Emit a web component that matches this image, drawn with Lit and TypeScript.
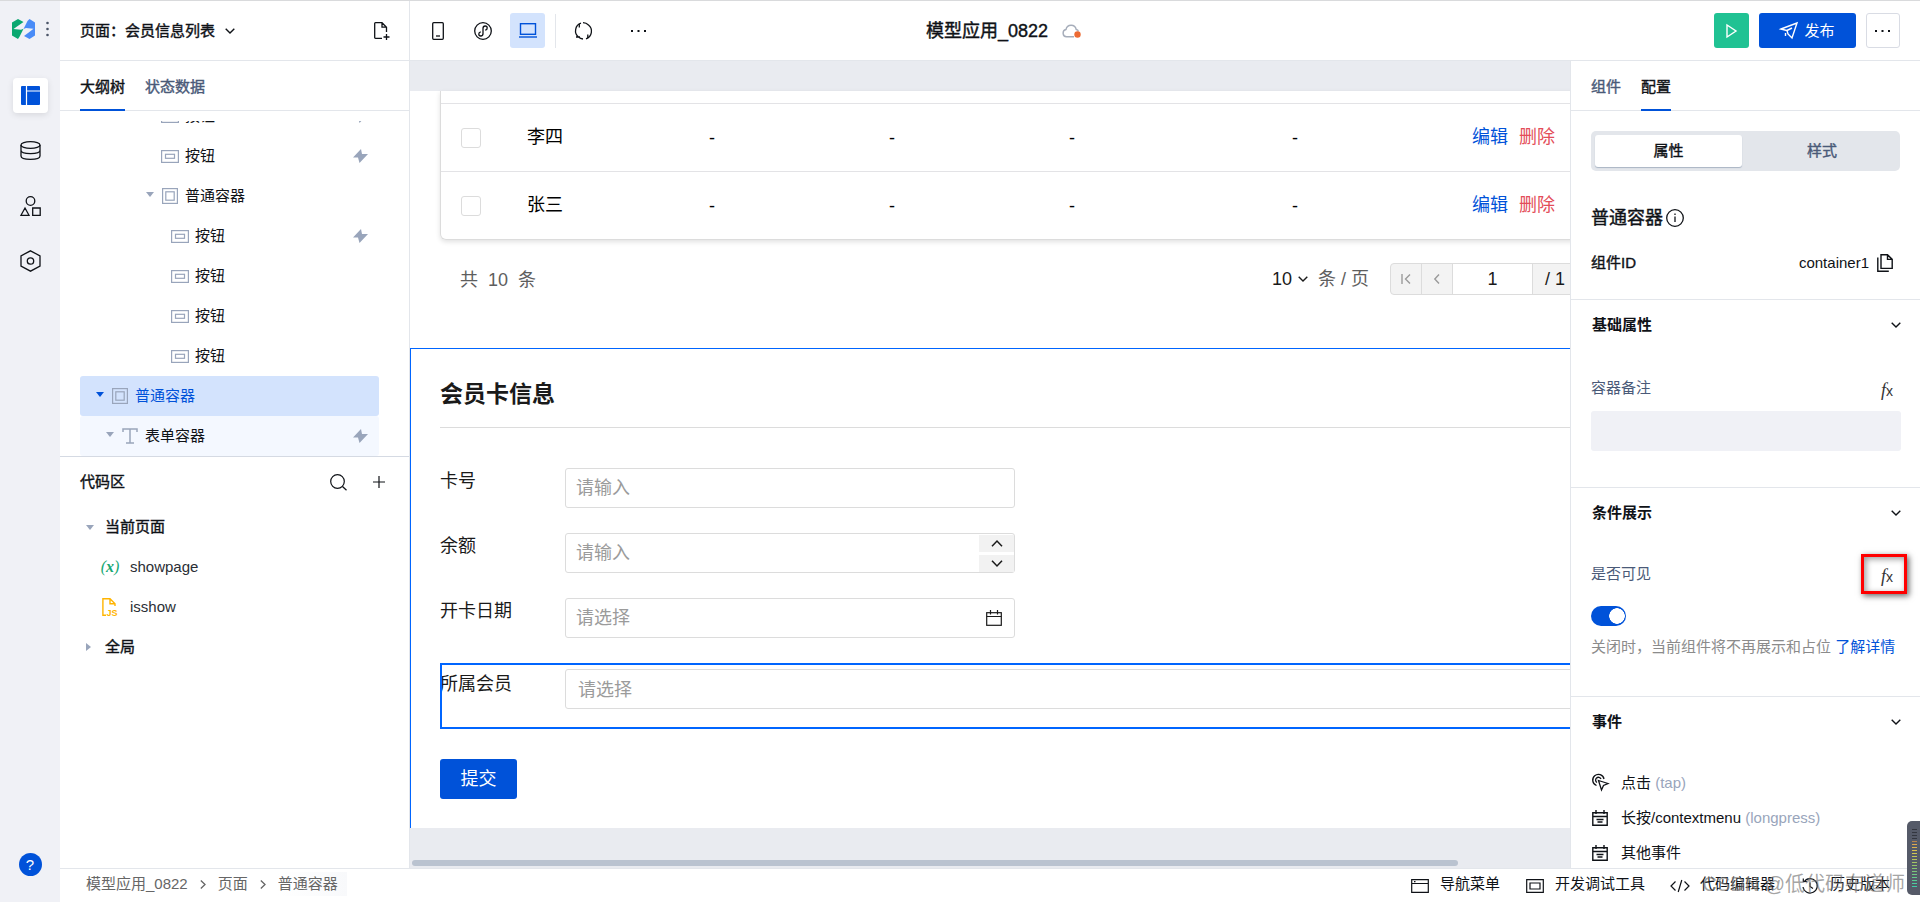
import { LitElement, html, svg, css, nothing } from "lit";
import type { TemplateResult } from "lit";
import { customElement, property } from "lit/decorators.js";
import { classMap } from "lit/directives/class-map.js";

const FONT = css`"Liberation Sans", "Noto Sans CJK SC", sans-serif`;

const base = css`
  *, *::before, *::after { box-sizing: border-box; }
  :host { font: 15px/20px ${FONT}; color: #0f1217; }
  button, input, select { font: inherit; color: inherit; margin: 0; }
  button { padding: 0; border: 0; background: none; display: inline-flex; align-items: center; justify-content: center; }
  input, select { outline: 0; }
  a { text-decoration: none; }
  h1, h2, h3, p, ul { margin: 0; padding: 0; font: inherit; }
  ul { list-style: none; }
  svg { display: block; flex: none; overflow: visible; }
  .strong { -webkit-text-stroke: 0.4px currentColor; }
`;

const ico = (w: number, h: number, body: TemplateResult, width = 1.2) => html`<svg
  width=${w} height=${h} viewBox="0 0 ${w} ${h}" fill="none" stroke="currentColor"
  stroke-width=${width} aria-hidden="true">${body}</svg>`;

const chevronDown = () => ico(10, 6, svg`<path d="M.7.7 5 5 9.300.7"/>`, 1.4);
const chevronRight = () => ico(6, 9, svg`<path d="M.8.6 5 4.500.8 8.400"/>`, 1.3);
const dots = () => ico(16, 4, svg`<g fill="currentColor" stroke="none"><rect x="0" y="1" width="2" height="2"/><rect x="6.500" y="1" width="2" height="2"/><rect x="13" y="1" width="2" height="2"/></g>`);
const buttonIcon = () => ico(18, 13, svg`<rect x=".6" y=".6" width="16.800" height="11.800"/><rect x="4.500" y="4.300" width="9" height="4"/>`);
const boxIcon = () => ico(16, 16, svg`<rect x=".6" y=".6" width="14.800" height="14.800"/><rect x="3.800" y="3.800" width="8.400" height="8.400"/>`);
const textIcon = () => ico(16, 16, svg`<path d="M1 4V1h14v3M8 1v14M4 15h8"/>`, 1.5);
const bolt = () => ico(15, 14, svg`<path d="M8 0 0 8.500h5L6.500 14 15 5H9z" fill="currentColor" stroke="none"/>`);
const arrow = () => ico(8, 5, svg`<path d="M0 0h8L4 5z" fill="currentColor" stroke="none"/>`);
const arrowSide = () => ico(5, 8, svg`<path d="M0 0v8l5-4z" fill="currentColor" stroke="none"/>`);
const eventIcon = () => ico(16, 16, svg`<path d="M.8 2.800h14.400v12.400H.8zM.8 6.500h14.400M4 0v4M12 0v4M4.500 9.500h7M5.500 12h5"/>`, 1.4);

interface TreeItem { level: number; label: string; kind: "button" | "box" | "text"; bolt?: boolean; selected?: boolean; tinted?: boolean }

const TREE: TreeItem[] = [
  { level: 5, label: "按钮", kind: "button", bolt: true },
  { level: 5, label: "按钮", kind: "button", bolt: true },
  { level: 5, label: "普通容器", kind: "box" },
  { level: 6, label: "按钮", kind: "button", bolt: true },
  { level: 6, label: "按钮", kind: "button" },
  { level: 6, label: "按钮", kind: "button" },
  { level: 6, label: "按钮", kind: "button" },
  { level: 0, label: "普通容器", kind: "box", selected: true },
  { level: 1, label: "表单容器", kind: "text", bolt: true, tinted: true },
];

@customElement("side-rail")
export class SideRail extends LitElement {
  static styles = [base, css`
    :host { background: #f0f1f6; width: 60px; display: flex; flex-direction: column; align-items: center; padding: 18px 0 26px; }
    .brand { display: flex; align-items: center; gap: 10px; color: #4b5568; height: 20px; }
    nav { display: flex; flex-direction: column; gap: 20px; margin-top: 39px; }
    .item { width: 35px; height: 35px; border-radius: 4px; }
    .active { background: #fff; color: #0052d9; box-shadow: 0 2px 6px #0000001a; }
    .help { margin-top: auto; width: 23px; height: 23px; border-radius: 50%; background: #0052d9; color: #fff; }
  `];
  render() {
    return html`
      <div class="brand">
        <svg width="24" height="20" viewBox="0 0 24 20">
          <path fill="#0aa870" d="M0 3.500 6 0l5.500 3L5 7.500 1.500 10 9 10.800l2.500-1-4 8L6 20 0 16.500z"/>
          <path fill="#4a8cf7" d="M17.500 0 23 3.500v13L17.500 20 12 17l6-4.500 3.500-2.700-7.500-.8-2.500 1 4-8z"/>
        </svg>
        <svg width="3" height="16" viewBox="0 0 3 16" fill="currentColor"><circle cx="1.500" cy="2" r="1.300"/><circle cx="1.500" cy="8" r="1.300"/><circle cx="1.500" cy="14" r="1.300"/></svg>
      </div>
      <nav>
        <button class="item active" aria-label="编辑器"><svg width="19" height="19" viewBox="0 0 19 19"><rect width="19" height="19" rx="1" fill="#0052d9"/><path d="M5.500 0v19M5.500 5H19" stroke="#fff" stroke-width="1.200"/></svg></button>
        <button class="item" aria-label="数据源">${ico(21, 19, svg`<ellipse cx="10.500" cy="4" rx="9.500" ry="3.400"/><path d="M1 4v11c0 2 4 3.400 9.500 3.400S20 17 20 15V4M1 9.300c0 2 4 3.400 9.500 3.400S20 11.300 20 9.300"/>`, 1.3)}</button>
        <button class="item" aria-label="素材">${ico(21, 20, svg`<circle cx="10.500" cy="5" r="4.300"/><path d="M5 12 9 19.300H1zM12.700 12h7.500v7.300h-7.500z"/>`, 1.3)}</button>
        <button class="item" aria-label="设置">${ico(21, 22, svg`<path d="m10.500.8 9.500 5v10.400l-9.500 5-9.500-5V5.800z"/><circle cx="10.500" cy="11" r="3.200"/>`, 1.3)}</button>
      </nav>
      <button class="help" aria-label="帮助">?</button>`;
  }
}

@customElement("app-header")
export class AppHeader extends LitElement {
  static styles = [base, css`
    :host { display: grid; grid-template-columns: 1fr auto 1fr; height: 60px; border-bottom: 1px solid #e3e6eb; padding-right: 20px; background: #fff; }
    .left, .right, .title, .tools, .page { display: flex; align-items: center; }
    .page { width: 350px; flex: none; align-self: stretch; padding: 0 19px 0 20px; border-right: 1px solid #e3e6eb; justify-content: space-between; }
    .picker { gap: 10px; }
    .tools { padding-left: 10px; }
    .tool { width: 35px; height: 35px; border-radius: 3px; margin-right: 10px; }
    .active { background: #d3e3fd; color: #0052d9; }
    .sep { width: 1px; height: 34px; background: #e3e6eb; }
    .spaced { margin: 0 10px; }
    .title { font-size: 18px; gap: 14px; padding-left: 48px; }
    .right { justify-content: flex-end; gap: 10px; }
    .run { width: 35px; height: 35px; border-radius: 3px; background: #20c293; color: #fff; }
    .publish { width: 97px; height: 35px; border-radius: 3px; background: #0052d9; color: #fff; gap: 6px; }
    .more { width: 34px; height: 35px; border-radius: 3px; border: 1px solid #d9dce4; }
  `];
  render() {
    return html`
      <div class="left">
        <div class="page">
          <button class="picker"><span class="strong">页面：会员信息列表</span>${chevronDown()}</button>
          <button aria-label="新建页面">${ico(16, 18, svg`<path d="M8 16.300H1.500Q.7 16.300.7 15.500V1.500Q.7.700 1.500.7H8l4.500 4.500V10M8 .7v4.500h4.500M12.500 12v6M9.500 15h6"/>`, 1.3)}</button>
        </div>
        <div class="tools">
          <button class="tool" aria-label="手机">${ico(12, 18, svg`<rect x=".7" y=".7" width="10.600" height="16.600" rx="1"/><path d="M4 14h4"/>`, 1.3)}</button>
          <button class="tool" aria-label="小程序">${ico(18, 18, svg`<circle cx="9" cy="9" r="8.300"/><path d="M9 11.500V6.500C9 5 10 4 11.200 4s2 .9 2 2-.9 2-2 2.200M9 6.500v5C9 13 8 14 6.800 14s-2-.9-2-2 .9-2 2-2.200"/>`, 1.3)}</button>
          <button class="tool active" aria-label="电脑">${ico(18, 15, svg`<rect x="1.500" y=".7" width="15" height="10.600"/><path d="M0 14h18"/>`, 1.4)}</button>
          <span class="sep"></span>
          <button class="tool spaced" aria-label="刷新">${ico(19, 18, svg`<path d="M7 1.200A8 8 0 0 0 4.500 15M2 15h4M12 16.800A8 8 0 0 0 14.500 3M9 .7a8 8 0 0 1 5.500 2.300M4.500 15A8 8 0 0 0 9 17"/><path d="M5.300 2v3.500M13.800 16v-3.500"/>`, 1.3)}</button>
          <button class="tool spaced" aria-label="更多">${dots()}</button>
        </div>
      </div>
      <div class="title"><h1 class="strong">模型应用_0822</h1>
        <svg width="20" height="14" viewBox="0 0 20 14" fill="none"><path d="M12 12.800H4.500A3.700 3.700 0 0 1 4 5.500a5.200 5.200 0 0 1 10.200 0 3 3 0 0 1 2.300 2" stroke="#a6adba" stroke-width="1.400"/><circle cx="15.500" cy="10.500" r="3.200" fill="#ed6a33"/></svg>
      </div>
      <div class="right">
        <button class="run" aria-label="预览">${ico(11, 14, svg`<path d="M1 1v12l9-6z"/>`, 1.4)}</button>
        <button class="publish">${ico(18, 17, svg`<path d="M1 7 17 1l-5 15-4-4-1-3.500zM7 8.500 12 6M5.500 11v3"/>`, 1.4)}<span>发布</span></button>
        <button class="more" aria-label="更多操作">${dots()}</button>
      </div>`;
  }
}

const tabStyles = css`
  .tabs { display: flex; gap: 20px; height: 50px; padding: 0 20px; border-bottom: 1px solid #e3e6eb; flex: none; }
  .tab { color: #4a5a78; padding-top: 2px; position: relative; }
  .tab.on { color: #0f1217; }
  .tab.on::after { content: ""; position: absolute; left: 0; right: 0; bottom: -1px; height: 2px; background: #0052d9; }
`;

@customElement("outline-panel")
export class OutlinePanel extends LitElement {
  static styles = [base, tabStyles, css`
    :host { width: 350px; background: #fff; border-right: 1px solid #e3e6eb; display: flex; flex-direction: column; min-height: 0; }
    .tree { padding: 0 30px 0 20px; margin-top: 10px; height: 336px; flex: none; overflow: hidden; display: flex; flex-direction: column; justify-content: flex-end; border-bottom: 1px solid #d5dae3; }
    .row { height: 40px; flex: none; display: flex; align-items: center; padding-right: 11px; border-radius: 3px; }
    .slot { width: 20px; display: flex; justify-content: center; color: #99a5bb; }
    .slot:first-of-type { padding-bottom: 3px; }
    .name { margin-left: 5px; flex: 1; }
    .bolt { color: #99a5bb; }
    .selected { background: #d3e3fd; color: #0052d9; }
    .selected .slot:first-of-type { color: #0052d9; }
    .tinted { background: #f4f8ff; }
    .head { display: flex; align-items: center; height: 50px; padding: 0 24px 0 20px; }
    .head h2 { flex: 1; }
    .head button { margin-left: 26px; }
    .code { display: flex; align-items: center; height: 40px; }
    .group { padding-left: 26px; gap: 11px; }
    .group span { width: 8px; color: #99a5bb; }
    .file { padding-left: 40px; gap: 10px; color: #2a2e35; }
    .file i { width: 20px; display: flex; justify-content: center; color: #19a974; font: italic 16px/20px "Liberation Serif", serif; }
    .js { font: bold 9px ${FONT}; }
  `];
  private icons = { button: buttonIcon, box: boxIcon, text: textIcon };
  render() {
    return html`
      <div class="tabs"><button class="tab on strong">大纲树</button><button class="tab strong">状态数据</button></div>
      <div class="tree">
        ${TREE.map((t) => html`<div class=${classMap({ row: true, selected: !!t.selected, tinted: !!t.tinted })} style="padding-left:${10 + t.level * 10}px">
          <span class="slot">${t.kind === "button" ? nothing : arrow()}</span><span class="slot">${this.icons[t.kind]()}</span>
          <span class="name">${t.label}</span>${t.bolt ? html`<span class="bolt">${bolt()}</span>` : nothing}</div>`)}
      </div>
      <div class="head"><h2 class="strong">代码区</h2>
        <button aria-label="搜索">${ico(17, 17, svg`<circle cx="7.500" cy="7.500" r="6.800"/><path d="m12.500 12.500 4 3.800"/>`)}</button>
        <button aria-label="新增">${ico(12, 12, svg`<path d="M6 0v12M0 6h12"/>`)}</button>
      </div>
      <div class="code group strong"><span>${arrow()}</span>当前页面</div>
      <div class="code file"><i>(<b>x</b>)</i>showpage</div>
      <div class="code file"><i><svg width="16" height="19" viewBox="0 0 16 19" fill="none" stroke="#ffb400" stroke-width="1.400"><path d="M4 17.300H.9V.8H8l5 5V8M8 .8v5h5"/><text class="js" x="4.500" y="17.800" fill="#ffb400" stroke="none">JS</text></svg></i>isshow</div>
      <div class="code group strong"><span>${arrowSide()}</span>全局</div>`;
  }
}

@customElement("design-canvas")
export class DesignCanvas extends LitElement {
  static styles = [base, css`
    :host { background: #e9ebf0; display: flex; flex-direction: column; min-width: 0; overflow: hidden; padding-top: 30px; font-size: 18px; line-height: 24px; }
    .board { min-width: 1280px; background: #fff; }
    .list { padding: 0 30px; height: 257px; }
    table { width: 100%; table-layout: fixed; border-spacing: 0; border: 1px solid #dcdcdc; border-top: 0; border-radius: 0 0 6px 6px; box-shadow: 0 2px 5px #0000001f; }
    th { height: 13px; padding: 0; border-bottom: 1px solid #e3e3e6; }
    td { height: 68px; padding: 0; text-align: center; border-bottom: 1px solid #e3e3e6; color: #000; }
    tr:last-child td { border-bottom: 0; height: 67px; }
    .c-check { width: 70px; } .c-name { width: 111px; } .c-val { width: 180px; } .c-wide { width: 266px; }
    td.name { text-align: left; padding-left: 16px; }
    td.name, td.acts { padding-bottom: 2px; }
    td.acts { text-align: left; padding-left: 44px; }
    td a { color: #0052d9; margin-right: 11px; }
    td a.del { color: #e34d59; margin: 0; }
    input[type="checkbox"] { appearance: none; display: block; width: 20px; height: 20px; border: 1px solid #dcdcdc; border-radius: 3px; background: #fff; margin-left: 20px; }
    .pager { display: flex; align-items: center; height: 78px; padding: 0 20px; color: #5e5e5e; }
    .total { display: flex; gap: 10px; width: 812px; padding-top: 2px; }
    .size { display: flex; align-items: center; color: #1a1a1a; gap: 5px; margin-right: 10px; }
    .size select { appearance: none; border: 0; padding: 0; background: none; }
    .unit { width: 72px; }
    .steps { display: flex; height: 32px; border: 1px solid #dcdcdc; border-radius: 4px; overflow: hidden; background: #f3f3f3; color: #1a1a1a; }
    .steps button { width: 31px; border-right: 1px solid #dcdcdc; color: #9a9a9a; }
    .steps input { width: 80px; border: 0; border-right: 1px solid #dcdcdc; background: #fff; text-align: center; }
    .steps span { padding: 3px 12px; white-space: nowrap; }
    .card { border: 1px solid #0065ff; border-bottom: 0; padding: 0 30px 29px 29px; }
    .card h2 { font-size: 23px; line-height: 30px; font-weight: 700; color: #1a1a1a; padding: 30px 0 18px; border-bottom: 1px solid #dcdcdc; }
    form { padding-top: 40px; color: #1a1a1a; }
    .field { display: flex; margin-bottom: 25px; }
    .field label { width: 125px; flex: none; padding-top: 1px; }
    .box { width: 450px; height: 40px; display: flex; align-items: center; border: 1px solid #dcdcdc; border-radius: 3px; background: #fff; }
    .box input, .box select { flex: 1; min-width: 0; border: 0; background: none; padding: 0 10px; height: 38px; appearance: none; color: #9b9b9b; }
    .box select { padding: 2px 12px 0; }
    .box input::placeholder { color: #9b9b9b; }
    .box svg { margin-right: 12px; }
    .spin { display: flex; flex-direction: column; gap: 3px; }
    .spin button { width: 35px; height: 17px; background: #f2f2f2; }
    .spin svg { margin: 0; }
    .picked { outline: 2px solid #0065ff; outline-offset: -2px; padding: 6px 0 20px; margin-bottom: 30px; }
    .picked label { padding-top: 3px; }
    .picked .box { flex: 1; }
    .submit { width: 77px; height: 40px; border-radius: 3px; background: #0052d9; color: #fff; }
    .scroll { margin: auto 2px 2px; height: 6px; }
    .thumb { height: 6px; border-radius: 3px; background: #bac3d0; }
  `];
  private names = ["李四", "张三"];
  render() {
    return html`
      <div class="board">
        <section class="list">
          <table>
            <colgroup><col class="c-check"><col class="c-name"><col class="c-val"><col class="c-val"><col class="c-val"><col class="c-wide"><col></colgroup>
            <thead><tr><th colspan="7"></th></tr></thead>
            <tbody>${this.names.map((n) => html`<tr>
              <td><input type="checkbox" aria-label=${n}></td><td class="name">${n}</td>
              <td>-</td><td>-</td><td>-</td><td>-</td>
              <td class="acts"><a href="#">编辑</a><a href="#" class="del">删除</a></td></tr>`)}</tbody>
          </table>
          <div class="pager">
            <div class="total"><span>共</span><span>10</span><span>条</span></div>
            <div class="size"><select aria-label="每页条数"><option>10</option></select>${chevronDown()}</div>
            <span class="unit">条 / 页</span>
            <div class="steps">
              <button aria-label="首页">${ico(10, 10, svg`<path d="M1 0v10M9 .5 4.500 5 9 9.500"/>`, 1.4)}</button>
              <button aria-label="上一页">${ico(6, 10, svg`<path d="M5 .5.800 5 5 9.500"/>`, 1.4)}</button>
              <input value="1" aria-label="页码"><span>/ 1 页</span>
            </div>
          </div>
        </section>
        <section class="card">
          <h2>会员卡信息</h2>
          <form>
            <div class="field"><label for="no">卡号</label><div class="box"><input id="no" placeholder="请输入"></div></div>
            <div class="field"><label for="sum">余额</label><div class="box"><input id="sum" placeholder="请输入">
              <div class="spin"><button type="button" aria-label="增加">${ico(12, 7, svg`<path d="M1 6.300 6 1l5 5.300"/>`, 1.5)}</button><button type="button" aria-label="减少">${ico(12, 7, svg`<path d="M1 .7 6 6 11 .7"/>`, 1.5)}</button></div></div></div>
            <div class="field"><label for="day">开卡日期</label><div class="box"><input id="day" placeholder="请选择">
              ${ico(16, 16, svg`<rect x=".7" y="2.700" width="14.600" height="12.600"/><path d="M.7 6.500h14.600M4.500 0v4.500M11.500 0v4.500"/>`, 1.2)}</div></div>
            <div class="field picked"><label for="member">所属会员</label><div class="box"><select id="member"><option>请选择</option></select></div></div>
            <button type="button" class="submit">提交</button>
          </form>
        </section>
      </div>
      <div class="scroll"><div class="thumb" style="width:90.500%"></div></div>`;
  }
}

@customElement("config-panel")
export class ConfigPanel extends LitElement {
  static styles = [base, tabStyles, css`
    :host { width: 350px; background: #fff; border-left: 1px solid #e3e6eb; display: flex; flex-direction: column; min-height: 0; overflow: hidden; }
    .seg { display: grid; grid-template-columns: 147px 1fr; gap: 6px; margin: 20px 20px 0; height: 40px; padding: 4px; background: #e3e6eb; border-radius: 5px; flex: none; }
    .seg button { color: #4a5a78; }
    .seg .on { background: #fff; border-radius: 3px; color: #0f1217; box-shadow: 0 1px 1px #a9b4c4; }
    .summary { padding: 32px 20px 26px; border-bottom: 1px solid #e3e6eb; }
    .summary h2 { font-size: 18px; line-height: 30px; display: flex; align-items: center; gap: 3px; }
    .line { display: flex; align-items: center; justify-content: space-between; }
    .id { margin-top: 20px; }
    .copy { display: flex; gap: 8px; align-items: center; padding-right: 7px; }
    section { border-bottom: 1px solid #e3e6eb; padding: 14px 19px 0 21px; }
    section:last-of-type { border: 0; }
    section h3 { font-weight: 700; }
    .head { height: 22px; }
    .note, .show { margin-left: -1px; color: #4a5a78; }
    .note { height: 151px; padding-top: 42px; }
    .show { height: 172px; padding-top: 40px; }
    .note .line, .show .line { height: 20px; }
    .fx { padding: 4px 8px 0 0; font: italic 18px/20px "Liberation Serif", serif; color: #333; }
    .fx small { font: 14px/20px ${FONT}; padding-top: 2px; }
    .fxwrap { position: relative; }
    .mark { position: absolute; right: -6px; top: -7px; width: 46px; height: 40px; border: 3px solid #f00; box-shadow: 2px 2px 6px #0009, inset 2px 2px 6px #0006; pointer-events: none; }
    .text { display: block; width: 100%; height: 40px; border: 0; border-radius: 3px; background: #f0f1f6; margin-top: 13px; padding: 0 10px; }
    .toggle { appearance: none; display: block; width: 35px; height: 20px; border-radius: 10px; margin: 22px 0 11px; background: radial-gradient(circle at 26px 10px, #fff 7.500px, #0052d9 8px); }
    .hint { color: #8b8b8b; white-space: nowrap; }
    .hint a { color: #0052d9; }
    .events { padding: 32px 0 0; }
    .events li { display: flex; align-items: center; height: 35px; gap: 12px; }
    .events i { width: 17px; display: flex; }
    .events em { color: #99a5bb; font-style: normal; }
  `];
  @property() componentId = "container1";
  private heading(t: string) {
    return html`<div class="line head"><h3>${t}</h3><button aria-label="收起">${chevronDown()}</button></div>`;
  }
  private fx() { return html`<button class="fx" aria-label="表达式">f<small>x</small></button>`; }
  render() {
    return html`
      <div class="tabs"><button class="tab strong">组件</button><button class="tab on strong">配置</button></div>
      <div class="seg"><button class="on strong">属性</button><button class="strong">样式</button></div>
      <div class="summary">
        <h2 class="strong">普通容器 ${ico(18, 18, svg`<circle cx="9" cy="9" r="8.300"/><path d="M9 7.500V13M9 4.500v1.600"/>`, 1.3)}</h2>
        <div class="line id"><span class="strong">组件ID</span><span class="copy">${this.componentId}<button aria-label="复制">${ico(16, 18, svg`<path d="M4 .7h6.500l4.700 4.700v9H4zM10.500.7v4.700h4.700M.8 3.500v13.700h11"/>`, 1.4)}</button></span></div>
      </div>
      <section>${this.heading("基础属性")}
        <div class="note"><div class="line"><label for="note">容器备注</label>${this.fx()}</div><input id="note" class="text"></div>
      </section>
      <section>${this.heading("条件展示")}
        <div class="show"><div class="line"><label for="vis">是否可见</label><span class="fxwrap">${this.fx()}<span class="mark"></span></span></div>
          <input id="vis" type="checkbox" class="toggle" checked>
          <p class="hint">关闭时，当前组件将不再展示和占位 <a href="#">了解详情</a></p></div>
      </section>
      <section>${this.heading("事件")}
        <ul class="events">
          <li><i>${ico(17, 17, svg`<path d="M4.500 11.500A5.700 5.700 0 1 1 12 5M5 8.500A2.800 2.800 0 1 1 9 5M6.500 6.500 16 9.500l-4.500 2L9.500 16z"/>`, 1.3)}</i><span>点击 <em>(tap)</em></span></li>
          <li><i>${eventIcon()}</i><span>长按/contextmenu <em>(longpress)</em></span></li>
          <li><i>${eventIcon()}</i><span>其他事件</span></li>
        </ul>
      </section>`;
  }
}

@customElement("status-bar")
export class StatusBar extends LitElement {
  static styles = [base, css`
    :host { display: flex; align-items: center; height: 34px; border-top: 1px solid #e3e6eb; padding: 0 30px 3px 26px; background: #fff; }
    .path { display: flex; align-items: center; gap: 12px; color: #666; flex: 1; }
    .now { background: linear-gradient(90deg, #fff, #f8f9fb); padding: 2px 9px 2px 0; }
    .tools { display: flex; gap: 26px; }
    .tools button { gap: 11px; }
    .tools i { width: 18px; display: flex; justify-content: center; padding-top: 3px; }
  `];
  render() {
    const tool = (icon: unknown, t: string) => html`<button><i>${icon}</i>${t}</button>`;
    return html`
      <nav class="path"><span>模型应用_0822</span>${chevronRight()}<span>页面</span>${chevronRight()}<span class="now">普通容器</span></nav>
      <div class="tools">
        ${tool(ico(18, 14, svg`<path d="M.7.7h16.600v12.600H.7zM.7 4.500h16.600M3 2.600h1.500"/>`), "导航菜单")}
        ${tool(ico(18, 14, svg`<path d="M.7.7h16.600v12.600H.7zM4 4h10v6H4z"/>`), "开发调试工具")}
        ${tool(ico(20, 12, svg`<path d="M5.500 1.500 1 6l4.500 4.500M14.500 1.500 19 6l-4.500 4.500M11.800 0 8.200 12"/>`), "代码编辑器")}
        ${tool(ico(16, 16, svg`<path d="M1 3.500h4M1.300 4V.5M2 4a7.200 7.200 0 1 1-1 5M8 4.500V8.500l3 2"/>`), "历史版本")}
      </div>`;
  }
}

@customElement("app-root")
export class AppRoot extends LitElement {
  static styles = [base, css`
    :host { display: grid; grid-template-columns: 60px minmax(0, 1fr); height: 100vh; border-top: 1px solid #d9dadc; overflow: hidden; position: relative; background: #fff; box-sizing: border-box; }
    .main { display: grid; grid-template-rows: 60px minmax(0, 1fr) 34px; min-height: 0; }
    .work { display: grid; grid-template-columns: 350px minmax(0, 1fr) 350px; min-height: 0; }
    .stamp { position: absolute; right: 15px; bottom: 4px; font-size: 20px; line-height: 28px; color: #777a; pointer-events: none; white-space: nowrap; }
    .meter { position: absolute; right: 0; bottom: 7px; width: 13px; height: 74px; border-radius: 5px 0 0 5px; background: #555a68; padding: 8px 3px 8px 5px; }
    .bars { height: 58px; background: repeating-linear-gradient(#0000 0 1px, #555a68 1px 3px), linear-gradient(#33363f 0 20%, #e09a50 22%, #d8c94e 40%, #8fc46c 65%, #3ecfa8); }
  `];
  render() {
    return html`
      <side-rail></side-rail>
      <div class="main">
        <app-header></app-header>
        <div class="work"><outline-panel></outline-panel><design-canvas></design-canvas><config-panel></config-panel></div>
        <status-bar></status-bar>
      </div>
      <span class="stamp">CSDN @低代码布道师</span>
      <div class="meter"><div class="bars"></div></div>`;
  }
}
